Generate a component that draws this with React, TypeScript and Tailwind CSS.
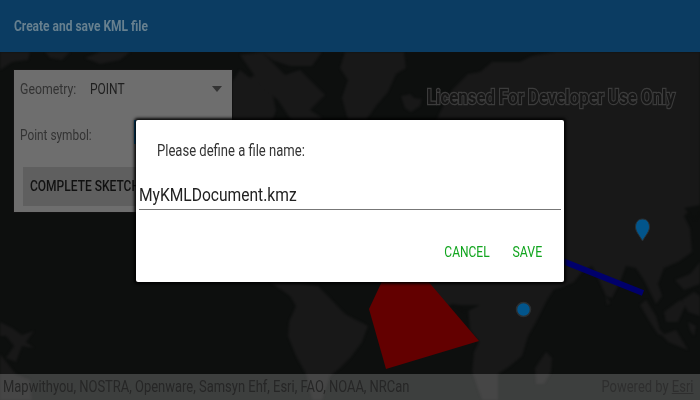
import React from "react";

const font = "[font-family:Roboto,'Noto_Sans',sans-serif]";

function MapArt() {
  const land = "#181818";
  return (
    <svg className="absolute inset-0 w-full h-full" viewBox="0 52 700 348" fill={land}>
      <rect x="0" y="52" width="700" height="348" fill="#0d0f0e" />
      <g className="blur-[0.8px]">
        <path d="M0 52L30 52L28 60L12 62L0 70Z" />
        <path d="M45 52L70 52L62 60L50 58Z" />
        <path d="M85 58L100 52L130 52L120 60L100 64Z" />
        <path d="M232 132L232 82L240 70L250 78L258 72L272 92L276 110L270 128L250 136L232 146Z" />
        <path d="M240 55L262 52L285 75L300 70L325 95L310 110L322 118L310 140L295 130L290 118L278 100L262 88L252 72Z" />
        <path d="M262 52L322 52L312 66L290 66L272 60Z" />
        {/* Greenland */}
        <path d="M345 52L404 52L406 68L396 74L388 92L376 106L366 120L348 120L342 98L348 80L340 68Z" />
        {/* Iceland */}
        <path d="M401 96L410 94L414 98L422 99L420 106L411 112L405 108Z" />
        {/* Eurasia */}
        <path d="M432 130L442 108L452 90L468 74L480 72L492 62L520 62L532 56L556 52L700 52L700 208L690 210L684 216L690 228L692 252L678 262L664 268L658 284L662 296L656 304L650 292L644 280L636 268L626 266L620 282L612 298L606 296L598 278L592 266L582 272L574 282L560 288L540 292L500 260L440 200Z" />
        {/* Africa and Middle East */}
        <path d="M410 282L540 282L534 287L552 286L554 289L547 300L537 320L528 336L522 356L510 366L498 374L498 400L482 400L472 372L474 352L479 342L470 330L468 306L452 304L444 308Z" />
        <path d="M546 352L552 358L551 372L544 384L536 384L535 368Z" />
        {/* South America */}
        <path d="M270 282L300 283L318 286L328 296L345 314L368 326L362 342L350 358L340 368L330 376L322 400L312 400L306 374L296 356L288 336L289 322L296 306L290 296Z" />
        <path d="M0 322L12 328L22 335L34 331L26 342L34 348L22 346L16 362L6 358L14 346L6 336L0 336Z" />
        <path d="M0 354L16 374L30 380L32 400L0 400Z" />
        {/* South-East Asia islands */}
        <path d="M640 305L646 300L656 316L660 330L668 338L658 334L650 322Z" />
        <path d="M662 335L676 330L682 340L688 350L668 342Z" />
        <path d="M664 312L680 300L686 304L678 322L666 322Z" />
        <path d="M682 300L694 292L700 296L700 316L688 312Z" />
        <path d="M688 322L696 326L694 336L690 330Z" />
        <path d="M606 296L610 303L607 305Z" />
        <path d="M675 280L690 274L700 262L700 284L684 290Z" />
        <path d="M684 208L700 205L700 212L695 220L690 214Z" fill="#0d0f0e" />
        <path d="M455 305L480 305L466 312Z" fill="#0d0f0e" />
      </g>
      {/* Polygon */}
      <path d="M392 260L410 260L479 341L386 369L369 309Z" fill="#630000" />
      {/* Line */}
      <line x1="520" y1="244" x2="643" y2="293" stroke="#00006b" strokeWidth="6" />
      {/* Circle */}
      <circle cx="523.5" cy="309.5" r="7" fill="#02558b" stroke="#2c2f31" strokeWidth="1.5" />
      {/* Pin */}
      <path
        d="M642.5 219C638 219 635.5 222.5 635.5 227C635.5 232 640 236 642.5 241C645 236 649.5 232 649.5 227C649.5 222.5 647 219 642.5 219Z"
        fill="#02558b"
        stroke="#2c2f31"
        strokeWidth="1"
      />
    </svg>
  );
}

export default function App() {
  return (
    <div className={`relative flex h-[400px] w-[700px] flex-col overflow-hidden bg-[#0d0f0e] ${font}`}>
      <header className="flex h-[52px] shrink-0 items-center bg-[#0b3c62] px-[14px]">
        <span className="origin-left scale-x-[0.8] whitespace-nowrap text-[15px] font-bold text-[#67808f]">
          Create and save KML file
        </span>
      </header>

      <main className="relative flex-1">
        <MapArt />

        <section className="absolute left-[13px] top-[17px] flex h-[144px] w-[220px] flex-col border border-[#111] bg-[#6e6e6e] px-[6px] pt-[7px]">
          <div className="flex h-[24px] items-center">
            <span className="w-[70px] origin-left scale-x-[0.82] whitespace-nowrap text-[15px] text-[#333]">Geometry:</span>
            <span className="origin-left scale-x-[0.8] whitespace-nowrap text-[15px] text-[#1f1f1f]">POINT</span>
            <span className="ml-auto mr-[4px] h-0 w-0 border-x-[5px] border-t-[6px] border-x-transparent border-t-[#333]" />
          </div>
          <div className="mt-[22px] flex h-[24px] items-center">
            <span className="origin-left scale-x-[0.79] whitespace-nowrap text-[15px] text-[#333]">Point symbol:</span>
          </div>
          <button className="mx-[3px] mt-[20px] flex h-[39px] items-center bg-[#5f5f5f] px-[7px]">
            <span className="origin-left scale-x-[0.8] whitespace-nowrap text-[15px] font-medium text-[#111]">COMPLETE SKETCH</span>
          </button>
        </section>
        <div className="absolute left-[134px] top-[68px] h-[24px] w-[3px] bg-[#02558b]" />

        <div className="absolute left-[427px] top-[30px] whitespace-nowrap">
          <span className="inline-block origin-left scale-x-[0.84] text-[20px] font-bold text-[#161616] [-webkit-text-stroke:2.5px_#3c3c3c] [paint-order:stroke_fill]">
            Licensed For Developer Use Only
          </span>
        </div>

        <footer className="absolute inset-x-0 bottom-0 flex h-[26px] items-center justify-between bg-white/20 px-[3px]">
          <span className="origin-left scale-x-[0.81] whitespace-nowrap text-[16px] text-[#262626]">
            Mapwithyou, NOSTRA, Openware, Samsyn Ehf, Esri, FAO, NOAA, NRCan
          </span>
          <span className="origin-right scale-x-[0.81] whitespace-nowrap pr-[5px] text-[16px] text-[#2e2e2e]">
            Powered by <span className="underline">Esri</span>
          </span>
        </footer>
      </main>

      <div className="absolute left-[136px] top-[120px] flex h-[162px] w-[428px] flex-col rounded-[2px] bg-white shadow-[0_0_3px_2px_rgba(0,0,0,0.9)]">
        <p className="ml-[21px] mt-[20px] origin-left scale-x-[0.815] whitespace-nowrap text-[16px] leading-[22px] text-[#333]">
          Please define a file name:
        </p>
        <div className="ml-[3px] mr-[3px] mt-[20px] h-[28px] border-b border-[#777]">
          <span className="inline-block origin-left scale-x-[0.82] whitespace-nowrap text-[19px] leading-[26px] text-[#222]">
            MyKMLDocument.kmz
          </span>
        </div>
        <div className="mt-[31px] flex justify-end gap-[16px] pr-[22px]">
          <button className="whitespace-nowrap text-[15px] text-[#12a51f]">
            <span className="inline-block origin-right scale-x-[0.8]">CANCEL</span>
          </button>
          <button className="whitespace-nowrap text-[15px] text-[#12a51f]">
            <span className="inline-block origin-right scale-x-[0.82]">SAVE</span>
          </button>
        </div>
      </div>
    </div>
  );
}
